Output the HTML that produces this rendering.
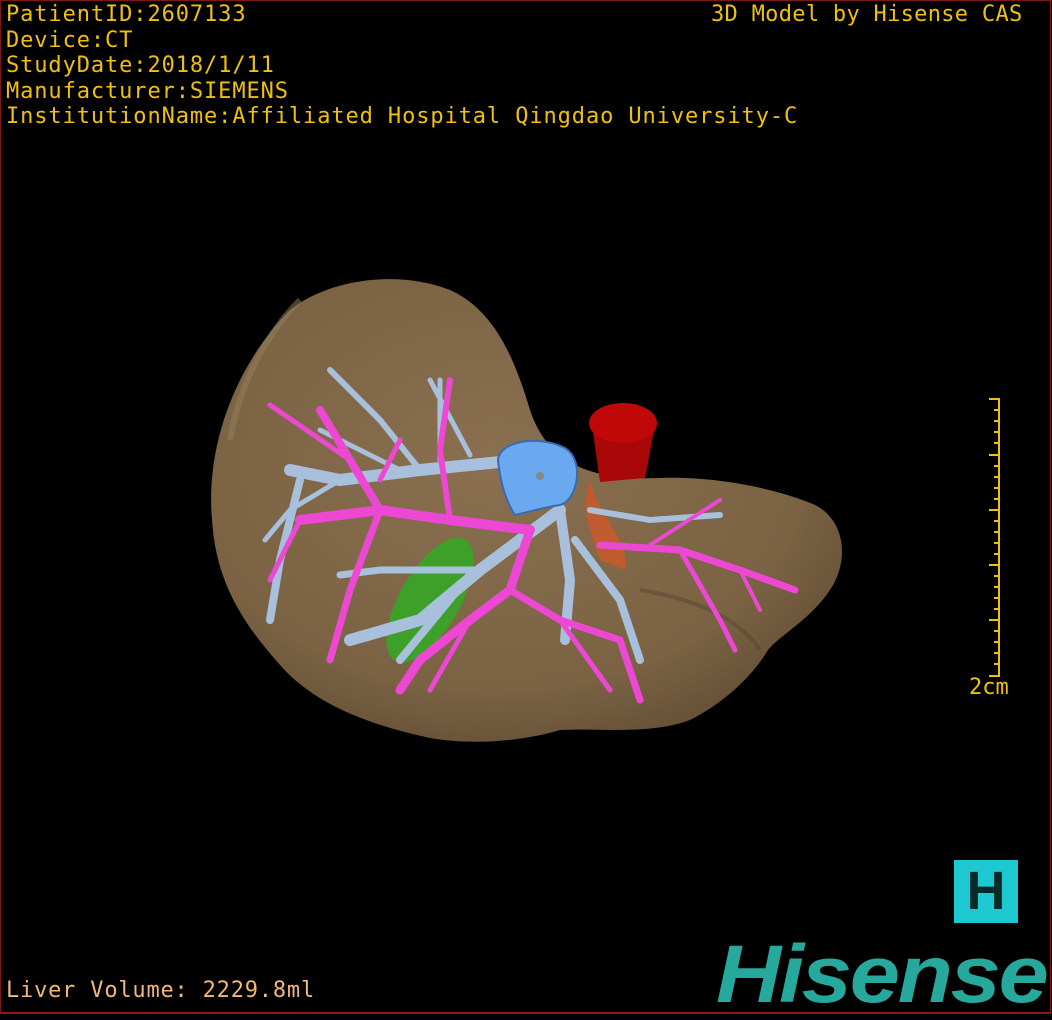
<!DOCTYPE html>
<html><head><meta charset="utf-8"><style>
html,body{margin:0;padding:0;background:#000;}
body{width:1052px;height:1020px;position:relative;overflow:hidden;font-family:"DejaVu Sans Mono","Liberation Mono",monospace;}
.frame{position:absolute;left:0;top:0;width:1049px;height:1011px;border:1px solid #7a1818;border-bottom:2px solid #8a1a1a;}
.info{position:absolute;left:6px;top:2px;color:#f0c010;font-size:22px;line-height:25.5px;letter-spacing:0.9px;white-space:nowrap;}
.tr{position:absolute;left:711px;top:2px;color:#f0c010;font-size:22px;line-height:25px;letter-spacing:0.3px;white-space:nowrap;}
.vol{position:absolute;left:6px;top:978px;color:#f0b878;font-size:22px;letter-spacing:0.8px;white-space:nowrap;}
.cm{position:absolute;left:969px;top:675px;color:#f0c010;font-size:22px;}
.hbox{position:absolute;left:954px;top:860px;width:64px;height:63px;background:#1ec8d0;color:#0a2a2a;font-family:"Liberation Sans",sans-serif;font-size:54px;font-weight:bold;text-align:center;line-height:63px;}
.logo{position:absolute;left:716px;top:930px;color:#26a89c;font-family:"Liberation Sans",sans-serif;font-size:82px;font-weight:bold;font-style:italic;letter-spacing:-2px;line-height:90px;transform:scaleX(1.1);transform-origin:left;white-space:nowrap;}
</style></head><body>
<div class="frame"></div>
<div class="info">PatientID:2607133<br>Device:CT<br>StudyDate:2018/1/11<br>Manufacturer:SIEMENS<br>InstitutionName:Affiliated Hospital Qingdao University-C</div>
<div class="tr">3D Model by Hisense CAS</div>
<svg width="1052" height="1020" style="position:absolute;left:0;top:0">
<defs>
<radialGradient id="lv" cx="0.45" cy="0.4" r="0.7">
<stop offset="0" stop-color="#8a7050"/><stop offset="0.7" stop-color="#7a6243"/><stop offset="1" stop-color="#5e4a32"/></radialGradient>
</defs>
<path d="M212,520 C205,440 240,360 290,310 C330,278 400,270 450,290 C495,310 515,360 530,410 C550,470 600,480 660,478 C720,476 780,490 815,505 C845,520 850,560 830,590 C810,620 780,635 768,650 C750,680 720,705 690,720 C650,735 600,728 560,730 C520,742 470,745 430,738 C370,725 315,705 280,665 C240,620 216,580 212,520 Z" fill="url(#lv)"/>
<path d="M300,300 C270,330 240,380 230,440" stroke="#96805e" stroke-width="6" fill="none" opacity=".5"/>
<path d="M640,590 C700,600 740,620 760,650" stroke="#5a4630" stroke-width="4" fill="none" opacity=".5"/>
<path d="M592,425 L655,425 L645,478 L600,482 Z" fill="#a80808"/>
<ellipse cx="623" cy="423" rx="34" ry="20" fill="#c00808"/>
<path d="M590,480 C600,520 630,540 625,570 L600,560 C590,530 580,510 590,480Z" fill="#d05828" opacity=".8"/>
<ellipse cx="430" cy="600" rx="30" ry="70" transform="rotate(30 430 600)" fill="#3ea028"/>
<g stroke="#a8c0dc" stroke-linecap="round" fill="none">
<path d="M520,460 L420,470 L340,480 L290,470" stroke-width="12"/>
<path d="M420,470 L380,420 L330,370" stroke-width="6"/>
<path d="M440,460 L440,380" stroke-width="5"/>
<path d="M470,455 L430,380" stroke-width="5"/>
<path d="M300,480 L280,560 L270,620" stroke-width="8"/>
<path d="M340,480 L290,510 L265,540" stroke-width="5"/>
<path d="M560,510 L480,570 L420,620 L350,640" stroke-width="12"/>
<path d="M470,575 L400,660" stroke-width="8"/>
<path d="M560,510 L570,580 L565,640" stroke-width="10"/>
<path d="M575,540 L620,600 L640,660" stroke-width="8"/>
<path d="M590,510 L650,520 L720,515" stroke-width="6"/>
<path d="M480,570 L380,570 L340,575" stroke-width="7"/>
<path d="M400,470 L320,430" stroke-width="5"/>
</g>
<g stroke="#ec48d4" stroke-linecap="round" fill="none">
<path d="M530,530 L450,520 L380,510 L300,520" stroke-width="10"/>
<path d="M380,510 L350,460 L320,410" stroke-width="8"/>
<path d="M350,460 L270,405" stroke-width="5"/>
<path d="M380,510 L350,590 L330,660" stroke-width="7"/>
<path d="M450,520 L440,450 L450,380" stroke-width="6"/>
<path d="M530,530 L510,590 L470,620 L420,660 L400,690" stroke-width="9"/>
<path d="M510,590 L560,620 L620,640 L640,700" stroke-width="7"/>
<path d="M600,545 L680,550 L740,570 L795,590" stroke-width="7"/>
<path d="M680,550 L720,620 L735,650" stroke-width="5"/>
<path d="M650,545 L720,500" stroke-width="4"/>
<path d="M740,570 L760,610" stroke-width="4"/>
<path d="M300,520 L270,580" stroke-width="5"/>
<path d="M470,620 L430,690" stroke-width="5"/>
<path d="M560,620 L610,690" stroke-width="5"/>
<path d="M400,440 L380,480" stroke-width="5"/>
</g>
<path d="M498,460 C500,440 540,435 565,448 C585,460 578,500 560,505 C540,508 530,512 515,515 C505,500 500,480 498,460Z" fill="#6aa8f0" stroke="#3a6ab0" stroke-width="2"/>
<circle cx="540" cy="476" r="4" fill="#888"/>
<g stroke="#f0c010" stroke-width="2">
<line x1="999" y1="398" x2="999" y2="677"/>
<line x1="989" y1="399" x2="999" y2="399"/>
<line x1="989" y1="455" x2="999" y2="455"/>
<line x1="989" y1="510" x2="999" y2="510"/>
<line x1="989" y1="565" x2="999" y2="565"/>
<line x1="989" y1="620" x2="999" y2="620"/>
<line x1="989" y1="676" x2="999" y2="676"/>
<path d="M994,410H999M994,421H999M994,432H999M994,443H999M994,466H999M994,477H999M994,488H999M994,499H999M994,521H999M994,532H999M994,543H999M994,554H999M994,576H999M994,587H999M994,598H999M994,609H999M994,631H999M994,642H999M994,653H999M994,664H999"/>
</g>
</svg>
<div class="cm">2cm</div>
<div class="hbox">H</div>
<div class="logo">Hisense</div>
<div class="vol">Liver Volume: 2229.8ml</div>
</body></html>
